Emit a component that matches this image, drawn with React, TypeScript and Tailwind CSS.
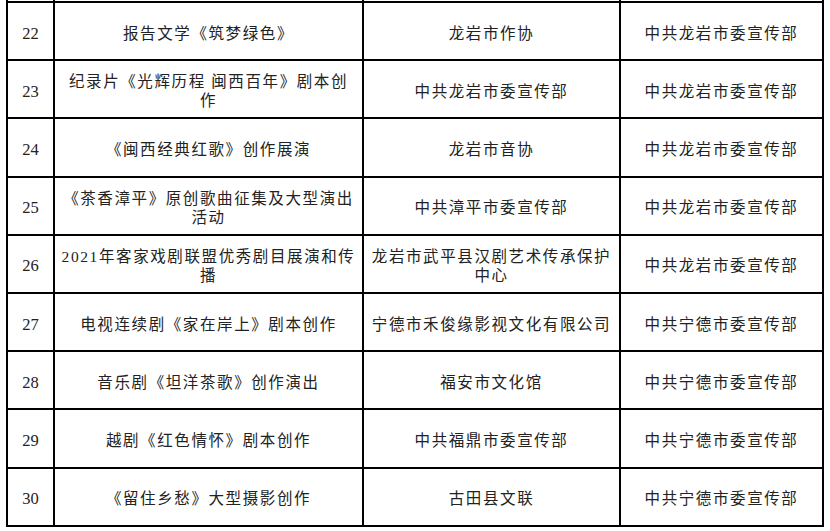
import React from 'react'

interface Row {
  no: string
  project: string[]
  org: string[]
  dept: string
}

const rows: Row[] = [
  { no: '22', project: ['报告文学《筑梦绿色》'], org: ['龙岩市作协'], dept: '中共龙岩市委宣传部' },
  { no: '23', project: ['纪录片《光辉历程 闽西百年》剧本创', '作'], org: ['中共龙岩市委宣传部'], dept: '中共龙岩市委宣传部' },
  { no: '24', project: ['《闽西经典红歌》创作展演'], org: ['龙岩市音协'], dept: '中共龙岩市委宣传部' },
  { no: '25', project: ['《茶香漳平》原创歌曲征集及大型演出', '活动'], org: ['中共漳平市委宣传部'], dept: '中共龙岩市委宣传部' },
  { no: '26', project: ['2021年客家戏剧联盟优秀剧目展演和传', '播'], org: ['龙岩市武平县汉剧艺术传承保护', '中心'], dept: '中共龙岩市委宣传部' },
  { no: '27', project: ['电视连续剧《家在岸上》剧本创作'], org: ['宁德市禾俊缘影视文化有限公司'], dept: '中共宁德市委宣传部' },
  { no: '28', project: ['音乐剧《坦洋茶歌》创作演出'], org: ['福安市文化馆'], dept: '中共宁德市委宣传部' },
  { no: '29', project: ['越剧《红色情怀》剧本创作'], org: ['中共福鼎市委宣传部'], dept: '中共宁德市委宣传部' },
  { no: '30', project: ['《留住乡愁》大型摄影创作'], org: ['古田县文联'], dept: '中共宁德市委宣传部' },
]

function Lines({ lines }: { lines: string[] }) {
  return (
    <>
      {lines.map((l, i) => (
        <div key={i} className="whitespace-nowrap">
          {l}
        </div>
      ))}
    </>
  )
}

export default function App() {
  return (
    <div
      className="w-[830px] h-[531px] bg-white overflow-hidden text-[#222]"
      style={{ fontFamily: '"Liberation Serif", "Noto Sans CJK SC", serif' }}
    >
      <table className="ml-[6px] -mt-[3px] w-[816px] table-fixed border-collapse text-[15.5px] leading-[19px] tracking-[1.6px]">
        <colgroup>
          <col className="w-[47px]" />
          <col className="w-[309px]" />
          <col className="w-[257px]" />
          <col className="w-[203px]" />
        </colgroup>
        <tbody>
          {/* tail of the previous row, cut off by the page edge */}
          <tr className="h-[5px]">
            <td className="border-2 border-black border-t-0"></td>
            <td className="border-2 border-black border-t-0"></td>
            <td className="border-2 border-black border-t-0"></td>
            <td className="border-2 border-black border-t-0"></td>
          </tr>
          {rows.map((r) => (
            <tr key={r.no} className="h-[58.2px]">
              <td className="border-2 border-black text-center pt-[4px] text-[16.5px] tracking-normal">{r.no}</td>
              <td className="border-2 border-black text-center pt-[4px]">
                <Lines lines={r.project} />
              </td>
              <td className="border-2 border-black text-center pt-[4px]">
                <Lines lines={r.org} />
              </td>
              <td className="border-2 border-black text-center pt-[4px]">{r.dept}</td>
            </tr>
          ))}
        </tbody>
      </table>
    </div>
  )
}
